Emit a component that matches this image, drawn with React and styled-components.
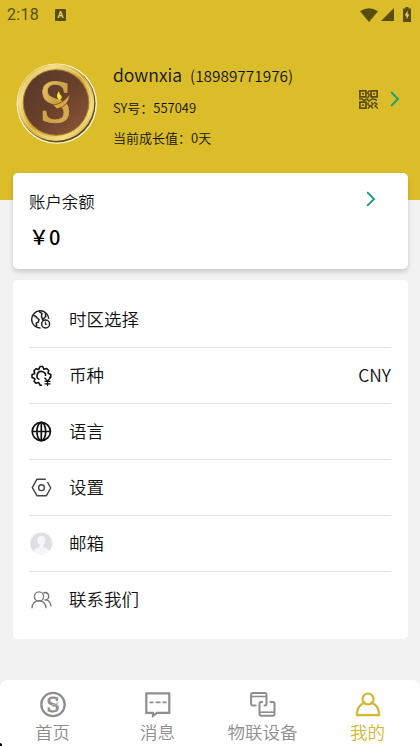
import React from 'react';
import styled, { createGlobalStyle } from 'styled-components';

const gold = '#dbbd29';
const green = '#0f9f78';

const GlobalStyle = createGlobalStyle`
  * { box-sizing: border-box; }
  body {
    margin: 0;
    background: #f2f2f2;
    color: #111;
    font-family: "Noto Sans CJK SC", sans-serif;
    font-weight: 350;
    overflow: hidden;
  }
  svg { display: block; flex: none; }
`;

const Page = styled.div`
  display: flex;
  flex-direction: column;
  height: 746px;
  overflow: hidden;
`;

const Header = styled.header`
  height: 200px;
  flex: none;
  background: ${gold};
`;

const StatusBar = styled.div`
  display: flex;
  align-items: center;
  height: 28px;
  padding: 1px 6px 0 7px;
  color: #594d0c;
  font: 400 16px/28px Roboto, sans-serif;
  letter-spacing: 0.3px;
`;

const AppBadge = styled.span`
  display: flex;
  align-items: center;
  justify-content: center;
  width: 11px;
  height: 12px;
  margin-left: 16px;
  border-radius: 1px;
  background: #594d0c;
  color: #e5d06a;
  font: 700 9px/12px Roboto, sans-serif;
  letter-spacing: 0;
`;

const StatusIcons = styled.div`
  display: flex;
  align-items: center;
  gap: 3px;
  margin-left: auto;
`;

const Profile = styled.div`
  display: flex;
  padding: 35px 20px 0 16px;
`;

const ProfileInfo = styled.div`
  flex: 1;
  padding-left: 15px;
`;

const NameLine = styled.div`
  display: flex;
  align-items: baseline;
  gap: 8px;
  height: 26px;
  font-size: 17.6px;
  line-height: 24px;
  white-space: nowrap;
`;

const Phone = styled.span`
  font-size: 15.4px;
`;

const Meta = styled.div`
  margin-top: ${(p) => p.$gap}px;
  font-size: 13px;
  line-height: 20px;
`;

const ProfileLinks = styled.div`
  display: flex;
  align-items: center;
  gap: 12px;
  height: 18px;
  margin-top: 27px;
`;

const Card = styled.section`
  margin: 0 12px 0 13px;
  border-radius: 5px;
  background: #fff;
`;

const BalanceCard = styled(Card)`
  position: relative;
  flex: none;
  height: 96px;
  margin-top: -27px;
  padding: 15px 32px 0 16px;
  box-shadow: 0 3px 5px rgba(0, 0, 0, 0.16);
`;

const BalanceTitle = styled.div`
  display: flex;
  justify-content: space-between;
  align-items: flex-start;
  height: 24px;
  font-size: 16.4px;
  line-height: 26px;

  svg { margin-top: 3px; }
`;

const Amount = styled.div`
  margin-top: 10px;
  color: #000;
  font-size: 20px;
  font-weight: 500;
  line-height: 30px;
`;

const MenuCard = styled(Card)`
  flex: none;
  height: 359px;
  margin-top: 11px;
  padding: 12px 17px 0 16px;
`;

const MenuRow = styled.div`
  display: flex;
  align-items: center;
  height: 56px;
  padding-left: 1px;
  border-bottom: 1px solid #e2e2e2;
  font-size: 17.5px;
  line-height: 26px;

  &:last-child { border-bottom: 0; }
  span { padding-bottom: 2px; }
`;

const MenuLabel = styled.span`
  flex: 1;
  padding-left: 16px;
`;

const TabBar = styled.nav`
  display: flex;
  position: relative;
  flex: none;
  height: 66px;
  margin-top: auto;
  border-radius: 8px 8px 0 0;
  background: #fff;
`;

const Tab = styled.div`
  display: flex;
  flex: 1;
  flex-direction: column;
  align-items: center;
  padding-top: 11px;
  color: ${(p) => (p.$active ? '#d6b62e' : '#8e8e8e')};
  font-size: 17.5px;
  line-height: 26px;
`;

const Corner = styled.i`
  position: absolute;
  left: 0;
  bottom: 0;
  width: 2px;
  height: 3px;
  border-top-right-radius: 2px;
  background: #000;
`;

function Arrow() {
  return (
    <svg width="10" height="16" viewBox="0 0 10 16" fill="none" stroke={green} strokeWidth="1.8">
      <path d="M1.2 1.2 8 8l-6.8 6.8" />
    </svg>
  );
}

function Avatar() {
  return (
    <svg width="82" height="82" viewBox="0 0 82 82">
      <defs>
        <linearGradient id="rim" x1="0" y1="0" x2="1" y2="1">
          <stop offset="0" stopColor="#c99c34" />
          <stop offset=".25" stopColor="#f3dd85" />
          <stop offset=".5" stopColor="#d4a735" />
          <stop offset=".78" stopColor="#f4dc78" />
          <stop offset="1" stopColor="#a97b18" />
        </linearGradient>
        <linearGradient id="face" x1="0" y1="0" x2="1" y2="1">
          <stop offset="0" stopColor="#56372a" />
          <stop offset=".5" stopColor="#68402a" />
          <stop offset="1" stopColor="#91583a" />
        </linearGradient>
        <linearGradient id="mark" x1="0" y1="0" x2="1" y2="1">
          <stop offset="0" stopColor="#f5d574" />
          <stop offset=".5" stopColor="#c9a045" />
          <stop offset="1" stopColor="#e2b957" />
        </linearGradient>
      </defs>
      <circle cx="40.8" cy="40.6" r="40.2" fill="#fff8d8" />
      <circle cx="40.8" cy="40.6" r="38.8" fill="#664a16" />
      <circle cx="39.8" cy="39.5" r="38.5" fill="url(#rim)" />
      <circle cx="39.8" cy="39.5" r="36" fill="none" stroke="#f4df94" strokeWidth=".8" />
      <circle cx="40" cy="39.5" r="32.8" fill="url(#face)" stroke="#a57b27" />
      <text x="22.6" y="59.300" textLength="34" lengthAdjust="spacingAndGlyphs" fontFamily="DejaVu Serif" fontWeight="400" fontSize="55" fill="url(#mark)" stroke="#d1a64c" strokeWidth=".8">S</text>
      <path d="M37 42q10-1 17-11-1 12-13 15Z" fill="#d7aa42" stroke="#704522" strokeWidth=".8" />
      <path d="M43 37q-4-4 0-9 0 3 2.500 5 1 3-2.500 4Z" fill="#ffe72d" />
    </svg>
  );
}

function QrCode() {
  return (
    <svg width="19" height="19" viewBox="0 0 19 19" fill="none" stroke="#5e4d0e" strokeWidth="1.800">
      <path d="M.9.9h6v6h-6ZM12.100.9h6v6h-6ZM.9 12.100h6v6h-6Z" />
      <path d="M3 3.900h1.800M14.200 3.900h1.800M3 15.100h1.800" />
      <path d="M10.500 .5 8.500 3l2 2-2 3M0 9h3l2 1.500 3-1.500 2 2 3-2h2l3 1.500M9 12.500v2l2 1.500-2 2.500M12 12l2 2-2 2 2 2.500M15 12.500l3 1.500-2 2 3 2.500" strokeWidth="1.500" />
    </svg>
  );
}

function TimezoneIcon() {
  return (
    <svg width="23" height="24" viewBox="0 0 23 24" fill="none" stroke="#222" strokeWidth="1.5">
      <path d="M10.500 20A8.600 8.600 0 1 1 18.800 10.800" />
      <path d="M3.300 7.500q3.200.5 3.700 2.500l2 1.500-.8 2.700-2 1 .6 3.500M9 3.300l3 2.300-.6 2.500 1.300 3.700L15.700 8.500 15.500 5" />
      <circle cx="15.600" cy="16" r="4" />
      <path d="M15.400 13.600v2.700h1.700" strokeWidth="1.100" />
    </svg>
  );
}

function CurrencyIcon() {
  return (
    <svg width="23" height="24" viewBox="0 0 23 24" fill="none" stroke="#111" strokeWidth="1.6" strokeLinejoin="round">
      <path d="M12 21.300l-2-.2-1.300-2.600-2.800.7-1.800-1.800.8-2.700L2 13.500v-2.700l2.700-1.300-.7-2.700 2-2 2.600.8L10 2.500h2.700L14 5.300l2.700-.8 2 2-.7 2.700 2.800 1.300v2.500l-1.700.7" />
      <path d="M9.400 15.600A4.300 4.300 0 1 1 15.600 12" />
      <path d="M14.500 13.700l3 3.300 3-3.300M17.500 17v5M14.500 17.300h6M14.500 19.800h6" strokeWidth="1.300" />
    </svg>
  );
}

function GlobeIcon() {
  return (
    <svg width="23" height="24" viewBox="0 0 23 24" fill="none" stroke="#111" strokeWidth="1.7">
      <circle cx="11.300" cy="11.500" r="9.100" />
      <ellipse cx="11.300" cy="11.500" rx="4.400" ry="9.100" />
      <path d="M2.200 11.500h18.200M11.300 2.400v18.200" />
    </svg>
  );
}

function SettingsIcon() {
  return (
    <svg width="23" height="24" viewBox="0 0 23 24" fill="none" stroke="#444" strokeWidth="1.4">
      <path d="M15.800 3.300H6.800L2.300 11.600l4.800 8.200h9.200L20.700 12l-3.200-5.800" strokeLinejoin="round" />
      <circle cx="11.500" cy="11.700" r="2.900" />
    </svg>
  );
}

function MailUserIcon() {
  return (
    <svg width="23" height="24" viewBox="0 0 23 24">
      <circle cx="11.300" cy="11.500" r="11" fill="#dedfe3" />
      <path d="M4 19.500q1-3.500 5.500-4.200v-2.200Q7.500 11.500 7.500 8q0-4 4-4t4 4q0 3.500-2 5.100v2.200q4.500.7 5.500 4.200-3 3-7.500 3T4 19.500Z" fill="#f7f7f8" />
    </svg>
  );
}

function ContactIcon() {
  return (
    <svg width="23" height="24" viewBox="0 0 23 24" fill="none" stroke="#777" strokeWidth="1.3">
      <circle cx="9" cy="8.500" r="4.600" />
      <path d="M2 20.300v-.6a7 7 0 0 1 14 0v.6M13.200 5.200q1-.7 2-.7a3.800 3.800 0 0 1 1.200 7.300q4.400 1.300 4.500 6.600M14.500 12h2" />
    </svg>
  );
}

function HomeIcon() {
  return (
    <svg width="28" height="28" viewBox="0 0 28 28">
      <circle cx="14" cy="13.500" r="11.700" fill="none" stroke="currentColor" strokeWidth="2.300" />
      <text x="7.200" y="21.200" textLength="13.500" lengthAdjust="spacingAndGlyphs" fontFamily="DejaVu Serif" fontWeight="400" fontSize="21" fill="currentColor" stroke="currentColor" strokeWidth=".8">S</text>
      <path d="M13 14q5-.5 6.500-4.500-.2 5.500-5.500 6.500" fill="currentColor" stroke="#fff" strokeWidth=".4" />
    </svg>
  );
}

function MessageIcon() {
  return (
    <svg width="28" height="28" viewBox="0 0 28 28" fill="none" stroke="currentColor" strokeWidth="2.200">
      <path d="M2.300 2.300h23v19.500H13l-4 3v-3H2.300Z" />
      <path d="M5.500 11.300h4m2 0h5m2 0h4" strokeWidth="1.700" />
    </svg>
  );
}

function DevicesIcon() {
  return (
    <svg width="28" height="28" viewBox="0 0 28 28" fill="none" stroke="currentColor" strokeWidth="2" strokeLinejoin="round">
      <path d="M7.500 14.500H3.500q-1.400 0-1.400-1.400V3.400Q2.100 2 3.500 2h12.600Q17.500 2 17.500 3.400v9.700q0 1.400-1.400 1.400h-1.400" />
      <path d="M2.100 5.500h15.400" strokeWidth="1.600" />
      <path d="M14 11h-2.100Q10.500 11 10.500 12.400v10.900q0 1.400 1.400 1.400h12.200q1.400 0 1.400-1.400V12.400Q25.500 11 24.100 11h-3.500" />
      <path d="M10.500 21.200h15" strokeWidth="1.600" />
    </svg>
  );
}

function MineIcon() {
  return (
    <svg width="28" height="28" viewBox="0 0 28 28" fill="none" stroke="currentColor" strokeWidth="2.200">
      <circle cx="14" cy="8" r="5.500" />
      <path d="M10.200 12Q3 14.500 2.800 24.100h22.400Q25 14.500 17.800 12" strokeLinejoin="round" />
    </svg>
  );
}

const menu = [
  { label: '时区选择', Icon: TimezoneIcon },
  { label: '币种', Icon: CurrencyIcon, value: 'CNY' },
  { label: '语言', Icon: GlobeIcon },
  { label: '设置', Icon: SettingsIcon },
  { label: '邮箱', Icon: MailUserIcon },
  { label: '联系我们', Icon: ContactIcon },
];

const tabs = [
  { label: '首页', Icon: HomeIcon },
  { label: '消息', Icon: MessageIcon },
  { label: '物联设备', Icon: DevicesIcon },
  { label: '我的', Icon: MineIcon, active: true },
];

function App() {
  return (
    <Page>
      <GlobalStyle />
      <Header>
        <StatusBar>
          <span>2:18</span>
          <AppBadge>A</AppBadge>
          <StatusIcons>
            <svg width="18" height="14" viewBox="0 0 18 14" fill="currentColor">
              <path d="M0 3.300Q9-3 18 3.300L9 14Z" />
            </svg>
            <svg width="13" height="13" viewBox="0 0 13 13" fill="currentColor">
              <path d="M13 0v13H0Z" />
            </svg>
            <svg width="17" height="16" viewBox="0 0 17 16">
              <path d="M8.500 0h3v1.500H14V15H6V1.500h2.500Z" fill="currentColor" />
              <path d="M10.600 3.500 7.800 8.600h1.800v4l2.700-5.200h-1.700Z" fill="#e9d777" />
            </svg>
          </StatusIcons>
        </StatusBar>
        <Profile>
          <Avatar />
          <ProfileInfo>
            <NameLine>
              downxia <Phone>(18989771976)</Phone>
            </NameLine>
            <Meta $gap={9}>SY号：557049</Meta>
            <Meta $gap={10}>当前成长值：0天</Meta>
          </ProfileInfo>
          <ProfileLinks>
            <QrCode />
            <Arrow />
          </ProfileLinks>
        </Profile>
      </Header>

      <BalanceCard>
        <BalanceTitle>
          账户余额
          <Arrow />
        </BalanceTitle>
        <Amount>￥0</Amount>
      </BalanceCard>

      <MenuCard>
        {menu.map(({ label, Icon, value }) => (
          <MenuRow key={label}>
            <Icon />
            <MenuLabel>{label}</MenuLabel>
            {value && <span>{value}</span>}
          </MenuRow>
        ))}
      </MenuCard>

      <TabBar>
        {tabs.map(({ label, Icon, active }) => (
          <Tab key={label} $active={active}>
            <Icon />
            {label}
          </Tab>
        ))}
        <Corner />
      </TabBar>
    </Page>
  );
}

export default App;
